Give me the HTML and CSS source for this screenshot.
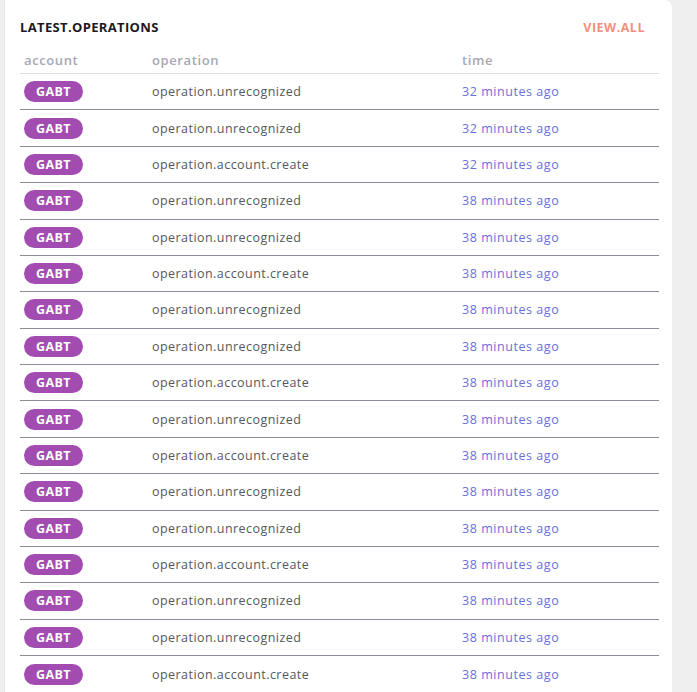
FILE: index.html
```html
<!DOCTYPE html>
<html>
<head>
<meta charset="utf-8">
<link rel="stylesheet" href="styles.css">
</head>
<body>
<div class="page">
  <section class="card">
    <div class="card-head">
      <h2 class="title">LATEST.OPERATIONS</h2>
      <a class="view-all" href="#">VIEW.ALL</a>
    </div>
    <table class="ops">
      <thead>
        <tr><th class="c-acc">account</th><th class="c-op">operation</th><th class="c-time">time</th></tr>
      </thead>
      <tbody>
        <tr><td><span class="badge">GABT</span></td><td class="op">operation.unrecognized</td><td class="time">32 minutes ago</td></tr>
        <tr><td><span class="badge">GABT</span></td><td class="op">operation.unrecognized</td><td class="time">32 minutes ago</td></tr>
        <tr><td><span class="badge">GABT</span></td><td class="op">operation.account.create</td><td class="time">32 minutes ago</td></tr>
        <tr><td><span class="badge">GABT</span></td><td class="op">operation.unrecognized</td><td class="time">38 minutes ago</td></tr>
        <tr><td><span class="badge">GABT</span></td><td class="op">operation.unrecognized</td><td class="time">38 minutes ago</td></tr>
        <tr><td><span class="badge">GABT</span></td><td class="op">operation.account.create</td><td class="time">38 minutes ago</td></tr>
        <tr><td><span class="badge">GABT</span></td><td class="op">operation.unrecognized</td><td class="time">38 minutes ago</td></tr>
        <tr><td><span class="badge">GABT</span></td><td class="op">operation.unrecognized</td><td class="time">38 minutes ago</td></tr>
        <tr><td><span class="badge">GABT</span></td><td class="op">operation.account.create</td><td class="time">38 minutes ago</td></tr>
        <tr><td><span class="badge">GABT</span></td><td class="op">operation.unrecognized</td><td class="time">38 minutes ago</td></tr>
        <tr><td><span class="badge">GABT</span></td><td class="op">operation.account.create</td><td class="time">38 minutes ago</td></tr>
        <tr><td><span class="badge">GABT</span></td><td class="op">operation.unrecognized</td><td class="time">38 minutes ago</td></tr>
        <tr><td><span class="badge">GABT</span></td><td class="op">operation.unrecognized</td><td class="time">38 minutes ago</td></tr>
        <tr><td><span class="badge">GABT</span></td><td class="op">operation.account.create</td><td class="time">38 minutes ago</td></tr>
        <tr><td><span class="badge">GABT</span></td><td class="op">operation.unrecognized</td><td class="time">38 minutes ago</td></tr>
        <tr><td><span class="badge">GABT</span></td><td class="op">operation.unrecognized</td><td class="time">38 minutes ago</td></tr>
        <tr><td><span class="badge">GABT</span></td><td class="op">operation.account.create</td><td class="time">38 minutes ago</td></tr>
      </tbody>
    </table>
  </section>
</div>
</body>
</html>
```

FILE: styles.css
```css
html, body {
  margin: 0;
  padding: 0;
  background: #efefef;
  font-family: "Open Sans", "Liberation Sans", sans-serif;
}
.page {
  padding: 0 25px 0 5px;
}
.card {
  background: #ffffff;
  border-radius: 0 8px 0 0;
  box-shadow: -1px 0 0 #e8e8e8;
  padding: 17px 13px 0 15px;
  width: 639px;
}
.card-head {
  display: flex;
  justify-content: space-between;
  align-items: center;
  height: 20px;
  padding-right: 14px;
}
.title {
  margin: 0;
  font-size: 13px;
  font-weight: 700;
  color: #1a1a1f;
  letter-spacing: 0.35px;
}
.view-all {
  font-size: 12.5px;
  font-weight: 700;
  color: #f4907f;
  text-decoration: none;
  letter-spacing: 0.5px;
}
.ops {
  width: 100%;
  border-collapse: collapse;
  margin-top: 9px;
}
.ops th {
  text-align: left;
  font-size: 13px;
  font-weight: 600;
  color: #a6a9b4;
  padding: 0 4px 0 4px;
  height: 27px;
  vertical-align: middle;
  border-bottom: 1px solid #dedfe3;
  letter-spacing: 0.6px;
}
.ops th.c-acc { width: 120px; }
.ops th.c-op { width: 302px; }
.ops td {
  padding: 0 4px;
  height: 35.375px;
  vertical-align: middle;
  border-bottom: 1px solid #8a8d98;
  font-size: 12.5px;
}
.ops tbody tr:last-child td { border-bottom: none; height: 37px; }
.badge {
  display: inline-flex;
  align-items: center;
  justify-content: center;
  width: 59px;
  height: 21px;
  border-radius: 11px;
  background: #a24bb1;
  color: #ffffff;
  font-weight: 700;
  font-size: 12.5px;
  letter-spacing: 0.4px;
}
.op {
  color: #56575e;
  letter-spacing: 0.45px;
}
.time {
  color: #6a6fdc;
  letter-spacing: 0.55px;
}
```
